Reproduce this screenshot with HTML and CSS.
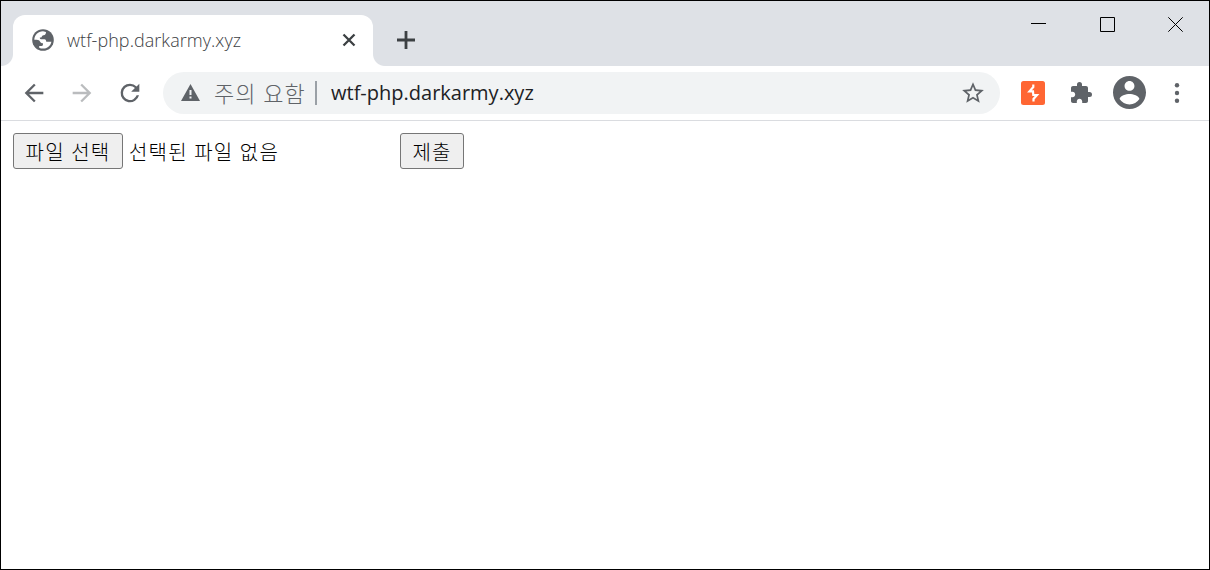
FILE: index.html
```html
<!DOCTYPE html>
<html lang="ko">
<head>
  <meta charset="UTF-8" />
  <title>wtf-php.darkarmy.xyz</title>
  <link rel="stylesheet" href="styles.css">
</head>
<body>
  <div class="window">
    <header class="tabstrip">
      <div class="tab">
        <svg class="globe" viewBox="0 0 22 22">
          <circle cx="11" cy="11" r="10.8" fill="#5f6368" />
          <path d="M2.300 10.800C2.500 6 6 2.500 11 2.300L14 2.900C14 5 13.300 6 11.500 6.200C10.200 6.400 10 7.500 9.300 8.400H7.800C7.800 9.800 8.500 10.300 10 10.300H12.500C13.800 10.300 14 11.500 14.300 12.700H19.400C18.500 17 15.200 19.600 11 19.600C9.500 19.600 8.300 19.300 7.200 18.700V17H9.500C11 17 11 15.500 11 14.200C9.300 14.200 8.500 13.500 8 12.400C7.300 11.200 5.500 10.800 2.300 10.800Z" fill="#fff" />
        </svg>
        <span class="tab-title">wtf-php.darkarmy.xyz</span>
        <svg class="tab-close" viewBox="0 0 14 14"><path d="M1.500 1.500l11 11M12.500 1.500l-11 11" /></svg>
      </div>
      <svg class="new-tab" viewBox="0 0 18 18"><path d="M9 0v18M0 9h18" /></svg>
      <div class="window-buttons">
        <svg viewBox="0 0 15 15"><path d="M0 6.500h15" /></svg>
        <svg viewBox="0 0 15 15"><path d="M.5.500h14v14h-14z" /></svg>
        <svg viewBox="0 0 15 15"><path d="M.3.300l14.400 14.400M14.700.300L.3 14.700" /></svg>
      </div>
    </header>

    <nav class="toolbar">
      <svg class="nav-icon" viewBox="0 0 24 24"><path d="M20 11H7.830l5.590-5.590L12 4l-8 8 8 8 1.410-1.410L7.830 13H20z" /></svg>
      <svg class="nav-icon disabled" viewBox="0 0 24 24"><path d="M12 4l-1.410 1.410L16.170 11H4v2h12.170l-5.580 5.590L12 20l8-8z" /></svg>
      <svg class="nav-icon" viewBox="0 0 24 24"><path d="M17.650 6.350A7.960 7.960 0 0 0 12 4a8 8 0 1 0 7.730 10h-2.080A6 6 0 1 1 12 6c1.660 0 3.140.69 4.220 1.780L13 11h7V4z" /></svg>
      <div class="address-bar">
        <svg class="warning" viewBox="0 0 19 17"><path d="M9.500 0L19 17H0zM8.500 6v5h2V6zM8.500 12.600v2h2v-2z" fill-rule="evenodd" /></svg>
        <span class="security">주의 요함</span>
        <span class="divider"></span>
        <span class="url">wtf-php.darkarmy.xyz</span>
        <svg class="star" viewBox="0 0 24 24"><path d="M22 9.240l-7.190-.62L12 2 9.190 8.630 2 9.240l5.460 4.730L5.820 21 12 17.270 18.180 21l-1.630-7.030zM12 15.400l-3.760 2.270 1-4.280-3.320-2.880 4.380-.38L12 6.100l1.710 4.040 4.380.38-3.320 2.880 1 4.280z" /></svg>
      </div>
      <svg class="burp" viewBox="0 0 24 24">
        <rect width="24" height="24" rx="2.500" fill="#ff6633" />
        <path d="M12.300 3.500V6L8.500 10.300H12L12.300 14H16L12.500 18V20.500" fill="none" stroke="#fff" stroke-width="2.200" />
      </svg>
      <svg class="puzzle" viewBox="0 0 24 24"><path d="M20.500 11H19V7c0-1.100-.9-2-2-2h-4V3.500a2.500 2.500 0 0 0-5 0V5H4c-1.100 0-1.990.9-1.990 2v3.800H3.500c1.490 0 2.700 1.210 2.700 2.700s-1.210 2.700-2.700 2.700H2V20c0 1.100.9 2 2 2h3.800v-1.500c0-1.490 1.210-2.700 2.700-2.700s2.700 1.210 2.700 2.700V22H17c1.100 0 2-.9 2-2v-4h1.500a2.500 2.500 0 0 0 0-5z" /></svg>
      <svg class="avatar" viewBox="2 2 20 20"><path d="M12 2C6.480 2 2 6.480 2 12s4.480 10 10 10 10-4.480 10-10S17.520 2 12 2zm0 3c1.660 0 3 1.340 3 3s-1.340 3-3 3-3-1.340-3-3 1.340-3 3-3zm0 14.200a7.200 7.200 0 0 1-6-3.220c.03-1.990 4-3.080 6-3.080 1.990 0 5.970 1.090 6 3.080a7.200 7.200 0 0 1-6 3.220z" /></svg>
      <svg class="menu" viewBox="0 0 6 20"><circle cx="3" cy="2.300" r="2.200" /><circle cx="3" cy="10" r="2.200" /><circle cx="3" cy="17.700" r="2.200" /></svg>
    </nav>

    <main>
      <form class="upload">
        <button type="button" class="choose">파일 선택</button>
        <span class="file-name">선택된 파일 없음</span>
        <button type="button" class="submit">제출</button>
      </form>
    </main>
  </div>
</body>
</html>
```
FILE: styles.css
```css
* {
  box-sizing: border-box;
}

body {
  margin: 0;
  font-family: "Open Sans", "Noto Sans CJK KR", sans-serif;
  color: #000;
}

svg {
  display: block;
  flex: none;
}

span {
  white-space: nowrap;
}

.window {
  height: 570px;
  border: 1px solid #000;
  background: #fff;
}

.tabstrip {
  display: flex;
  height: 65px;
  padding: 14px 0 0 12px;
  background: #dee1e6;
}

.tab {
  position: relative;
  display: flex;
  align-items: center;
  width: 360px;
  height: 51px;
  padding: 0 17px 1px 19px;
  background: #fff;
  border-radius: 12px 12px 0 0;
}

/* curved feet of the active tab */
.tab::before, .tab::after {
  content: "";
  position: absolute;
  bottom: 0;
  width: 12px;
  height: 12px;
}

.tab::before {
  left: -12px;
  background: radial-gradient(circle at 0 0, #dee1e6 11.5px, #fff 12.5px);
}

.tab::after {
  right: -12px;
  background: radial-gradient(circle at 100% 0, #dee1e6 11.5px, #fff 12.5px);
}

.globe {
  width: 22px;
  height: 22px;
}

.tab-title {
  flex: 1;
  margin-left: 13px;
  padding-bottom: 1px;
  font-size: 18px;
  font-weight: 300;
  letter-spacing: 0.05px;
  color: #3c4043;
}

.tab-close {
  width: 14px;
  height: 14px;
  stroke: #3c4043;
  stroke-width: 2.3;
}

.new-tab {
  width: 18px;
  height: 18px;
  margin: 16px 0 0 24px;
  stroke: #3c4043;
  stroke-width: 2.8;
}

.window-buttons {
  display: flex;
  gap: 53.5px;
  margin: 2px 26px 0 auto;
}

.window-buttons svg {
  width: 15px;
  height: 15px;
  fill: none;
  stroke: #000;
}

.toolbar {
  display: flex;
  align-items: center;
  height: 55px;
  padding: 0 29px 1px 19px;
  border-bottom: 1px solid #dadce0;
  fill: #5f6368;
}

.nav-icon {
  width: 28px;
  height: 28px;
  margin-right: 20px;
}

.disabled {
  fill: #babcbe;
}

.address-bar {
  display: flex;
  align-items: center;
  width: 837px;
  height: 42px;
  margin: 0 21px 0 -1px;
  padding: 0 14px 0 18px;
  background: #f1f3f4;
  border-radius: 21px;
}

.warning {
  width: 19px;
  height: 17px;
}

.security {
  width: 115px;
  padding: 0 0 2px 14px;
  font-size: 22px;
  font-weight: 300;
  letter-spacing: 1px;
  color: #5f6368;
}

.divider {
  width: 2px;
  height: 24px;
  margin-right: 14px;
  background: #9aa0a6;
}

.url {
  flex: 1;
  font-size: 20px;
  color: #202124;
}

.star {
  width: 26px;
  height: 26px;
}

.burp {
  width: 24px;
  height: 24px;
  margin-right: 24px;
}

.puzzle {
  width: 24px;
  height: 24px;
  margin-right: 20px;
}

.avatar {
  width: 33px;
  height: 33px;
}

.menu {
  width: 6px;
  height: 20px;
  margin-left: auto;
}

.upload {
  display: flex;
  align-items: center;
  margin: 12px;
  font-size: 20px;
  font-weight: 300;
  letter-spacing: 1.2px;
}

.upload button {
  height: 36px;
  padding: 0;
  border: 1px solid #767676;
  border-radius: 3px;
  background: #efefef;
  font: inherit;
  letter-spacing: inherit;
  color: #000;
}

.upload .choose {
  width: 110px;
}

.file-name {
  width: 271px;
  margin-left: 6px;
}

.upload .submit {
  width: 64px;
}
```
